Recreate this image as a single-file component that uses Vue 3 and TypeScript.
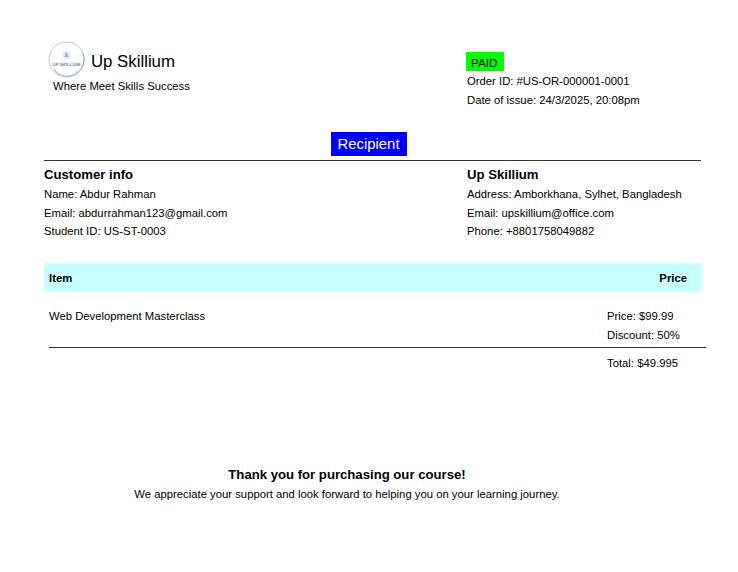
<script setup lang="ts">
const customer: string[] = ['Name: Abdur Rahman', 'Email: abdurrahman123@gmail.com', 'Student ID: US-ST-0003']
const company: string[] = ['Address: Amborkhana, Sylhet, Bangladesh', 'Email: upskillium@office.com', 'Phone: +8801758049882']
</script>

<template>
  <main class="page">
    <header class="top">
      <div class="brand">
        <div class="brand-row">
          <svg class="logo" width="37" height="37" viewBox="0 0 37 37" aria-hidden="true">
            <circle cx="18.5" cy="18.5" r="17.5" fill="#fff" stroke="#b9cbdb" stroke-width="1" />
            <path d="M6 29A17 17 0 0 0 35 12" fill="none" stroke="#8fa9c0" stroke-width="1" />
            <circle cx="18.5" cy="14" r="4.5" fill="#e6f0f6" />
            <path d="M18.5 10.5l2.2 5.5h-4.4z" fill="#8fb0c8" />
            <text x="18.5" y="25" text-anchor="middle" class="logo-text">UP SKILLIUM</text>
          </svg>
          <span class="brand-name">Up Skillium</span>
        </div>
        <div class="tagline">Where Meet Skills Success</div>
      </div>
      <div class="order">
        <span class="paid">PAID</span>
        <div class="order-lines">
          <div class="line">Order ID: #US-OR-000001-0001</div>
          <div class="line">Date of issue: 24/3/2025, 20:08pm</div>
        </div>
      </div>
    </header>

    <div class="recipient-wrap"><span class="recipient">Recipient</span></div>

    <section class="info">
      <div class="info-col">
        <h2>Customer info</h2>
        <div v-for="l in customer" :key="l" class="line">{{ l }}</div>
      </div>
      <div class="info-col right">
        <h2>Up Skillium</h2>
        <div v-for="l in company" :key="l" class="line">{{ l }}</div>
      </div>
    </section>

    <div class="thead"><span>Item</span><span>Price</span></div>

    <section class="item">
      <div class="item-row">
        <div class="item-name">Web Development Masterclass</div>
        <div class="amounts">
          <div class="line">Price: $99.99</div>
          <div class="line">Discount: 50%</div>
        </div>
      </div>
      <div class="total-row">
        <div class="amounts"><div class="line">Total: $49.995</div></div>
      </div>
    </section>

    <footer class="thanks">
      <h3>Thank you for purchasing our course!</h3>
      <p>We appreciate your support and look forward to helping you on your learning journey.</p>
    </footer>
  </main>
</template>

<style scoped>
.page {
  width: 738px;
  height: 572px;
  box-sizing: border-box;
  padding: 41px 0 0 44px;
  font-family: "Liberation Sans", Arial, sans-serif;
  font-size: 11.3px;
  color: #000;
  background: #fff;
  overflow: hidden;
}
.top {
  display: flex;
  height: 91px;
}
.brand {
  width: 422px;
  padding-left: 4px;
  box-sizing: border-box;
}
.brand-row {
  display: flex;
  align-items: center;
  gap: 6px;
  height: 37px;
}
.logo {
  flex: none;
}
.logo-text {
  font-family: "Liberation Sans", Arial, sans-serif;
  font-size: 4.4px;
  font-weight: 700;
  fill: #6d8599;
}
.brand-name {
  font-size: 16.8px;
  padding-top: 5px;
}
.tagline {
  margin: 2px 0 0 5px;
  line-height: 13px;
}
.order {
  padding-top: 11px;
}
.paid {
  display: block;
  width: 38px;
  height: 19px;
  box-sizing: border-box;
  padding-left: 5px;
  font-size: 11.7px;
  line-height: 21px;
  background: #00ff00;
}
.order-lines {
  margin: 1px 0 0 1px;
}
.line {
  line-height: 18.6px;
}
.recipient-wrap {
  width: 657px;
  display: flex;
  justify-content: center;
  border-bottom: 1px solid #333;
  height: 28px;
}
.recipient {
  display: block;
  width: 76px;
  height: 24px;
  margin-right: 8px;
  line-height: 24px;
  text-align: center;
  font-size: 14.9px;
  color: #fff;
  background: #0000ff;
}
.info {
  display: flex;
  margin-top: 5px;
}
.info-col {
  width: 422px;
}
.info-col.right {
  width: 235px;
  padding-left: 1px;
}
h2 {
  margin: 0 0 2px;
  font-size: 13.15px;
  font-weight: 700;
  line-height: 17px;
}
.thead {
  display: flex;
  justify-content: space-between;
  align-items: center;
  box-sizing: border-box;
  width: 658px;
  height: 29px;
  margin-top: 22px;
  padding: 1px 15px 0 5px;
  font-weight: 700;
  background: #c8ffff;
}
.item {
  width: 657px;
  margin-left: 5px;
}
.item-row {
  display: flex;
  justify-content: space-between;
  padding-top: 15.4px;
  height: 56px;
  box-sizing: border-box;
  border-bottom: 1px solid #333;
}
.item-name {
  line-height: 18.6px;
}
.amounts {
  width: 99px;
}
.total-row {
  display: flex;
  justify-content: flex-end;
  padding-top: 6px;
}
.thanks {
  width: 606px;
  margin-top: 93px;
  text-align: center;
}
h3 {
  margin: 0;
  font-size: 13.15px;
  font-weight: 700;
  line-height: 19px;
}
p {
  margin: 3px 0 0;
  line-height: 15px;
}
</style>
